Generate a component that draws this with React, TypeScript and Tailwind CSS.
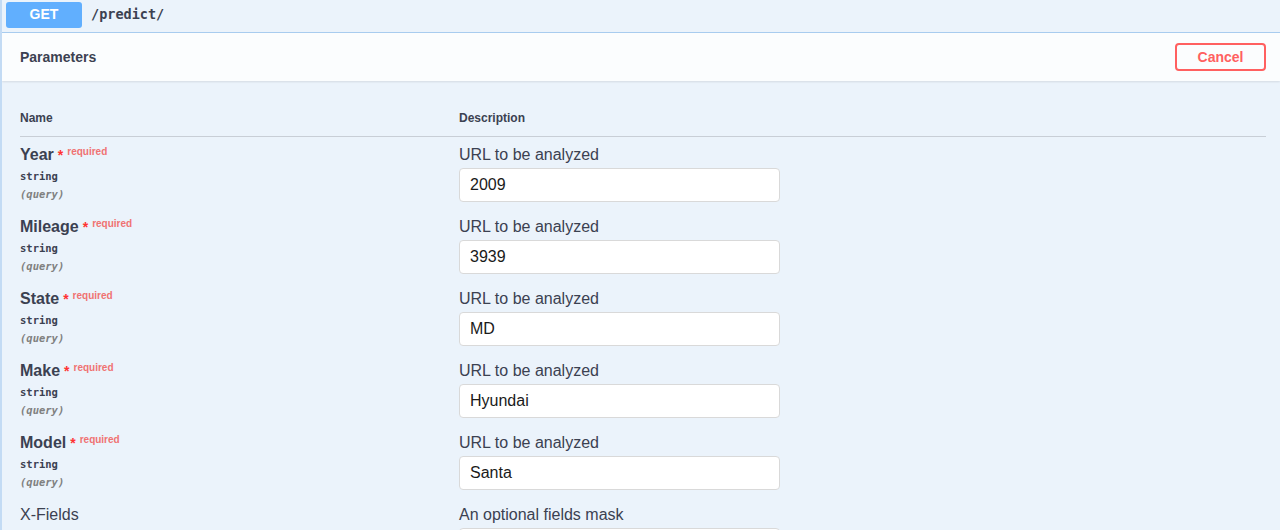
import React from "react";

interface Param {
  name: string;
  value: string;
}

const params: Param[] = [
  { name: "Year", value: "2009" },
  { name: "Mileage", value: "3939" },
  { name: "State", value: "MD" },
  { name: "Make", value: "Hyundai" },
  { name: "Model", value: "Santa" },
];

const sans = "font-['Liberation_Sans','Arial',sans-serif]";
const mono = "font-['DejaVu_Sans_Mono','Liberation_Mono',monospace]";

const ParamRow: React.FC<Param> = ({ name, value }) => (
  <div className="flex pt-[8px] pb-[7px]">
    <div className="w-[439px] shrink-0">
      <div className="flex items-start h-[20px] leading-[20px]">
        <span className="text-[16px] font-bold text-[#3b4151]">{name}</span>
        <span className="ml-[4px] text-[14px] leading-[20px] text-[#ff3333] font-bold">*</span>
        <span className="ml-[4px] text-[10px] leading-[12px] text-[#f07272] font-bold mt-[1px]">required</span>
      </div>
      <div className={`${mono} mt-[4px] text-[10.5px] leading-[14px] font-bold text-[#3b4151]`}>string</div>
      <div className={`${mono} mt-[4px] text-[10.5px] leading-[14px] font-bold italic text-[#808080]`}>(query)</div>
    </div>
    <div className="flex flex-col">
      <div className="text-[16px] leading-[20px] text-[#3b4151]">URL to be analyzed</div>
      <input
        readOnly
        value={value}
        className={`${sans} mt-[3px] w-[321px] h-[34px] px-[10px] bg-white border border-[#d9d9d9] rounded-[4px] text-[16px] text-[#1a1a1a] outline-none`}
      />
    </div>
  </div>
);

export default function App() {
  return (
    <div className={`${sans} h-[530px] w-full overflow-hidden bg-[#ebf3fb] border-l-2 border-[#c3dbf4]`}>
      {/* Summary */}
      <div className="flex items-center h-[33px] pl-[4px] pb-[3px] border-b border-[#a9cdf0]">
        <div className="w-[76px] h-[26px] flex items-center justify-center rounded-[3px] bg-[#61affe] text-white text-[14px] font-bold">
          GET
        </div>
        <span className={`${mono} ml-[9px] text-[13.5px] font-semibold text-[#3b4151]`}>/predict/</span>
      </div>

      {/* Parameters header */}
      <div className="flex items-center justify-between h-[48px] pl-[18px] pr-[14px] bg-white/80 shadow-[0_1px_2px_rgba(0,0,0,0.1)]">
        <span className="text-[14px] font-bold text-[#3b4151]">Parameters</span>
        <button className="w-[91px] h-[28px] border-2 border-[#ff6060] rounded-[4px] text-[14px] font-bold text-[#ff6060] bg-transparent">
          Cancel
        </button>
      </div>

      {/* Table */}
      <div className="pt-[20px] pl-[18px] pr-[14px]">
        <div className="flex pt-[9px] pb-[10px] border-b border-[#c8ced6] text-[12px] leading-[16px] font-bold text-[#3b4151]">
          <div className="w-[439px] shrink-0">Name</div>
          <div>Description</div>
        </div>

        {params.map((p) => (
          <ParamRow key={p.name} {...p} />
        ))}

        <div className="flex pt-[8px]">
          <div className="w-[439px] shrink-0">
            <div className="text-[16px] leading-[20px] text-[#3b4151]">X-Fields</div>
            <div className={`${mono} mt-[4px] text-[10.5px] leading-[14px] font-bold text-[#3b4151]`}>string($mask)</div>
          </div>
          <div className="flex flex-col">
            <div className="text-[16px] leading-[20px] text-[#3b4151]">An optional fields mask</div>
            <input
              readOnly
              value=""
              className="mt-[3px] w-[321px] h-[34px] px-[10px] bg-white border border-[#d9d9d9] rounded-[4px] text-[16px] outline-none"
            />
          </div>
        </div>
      </div>
    </div>
  );
}
